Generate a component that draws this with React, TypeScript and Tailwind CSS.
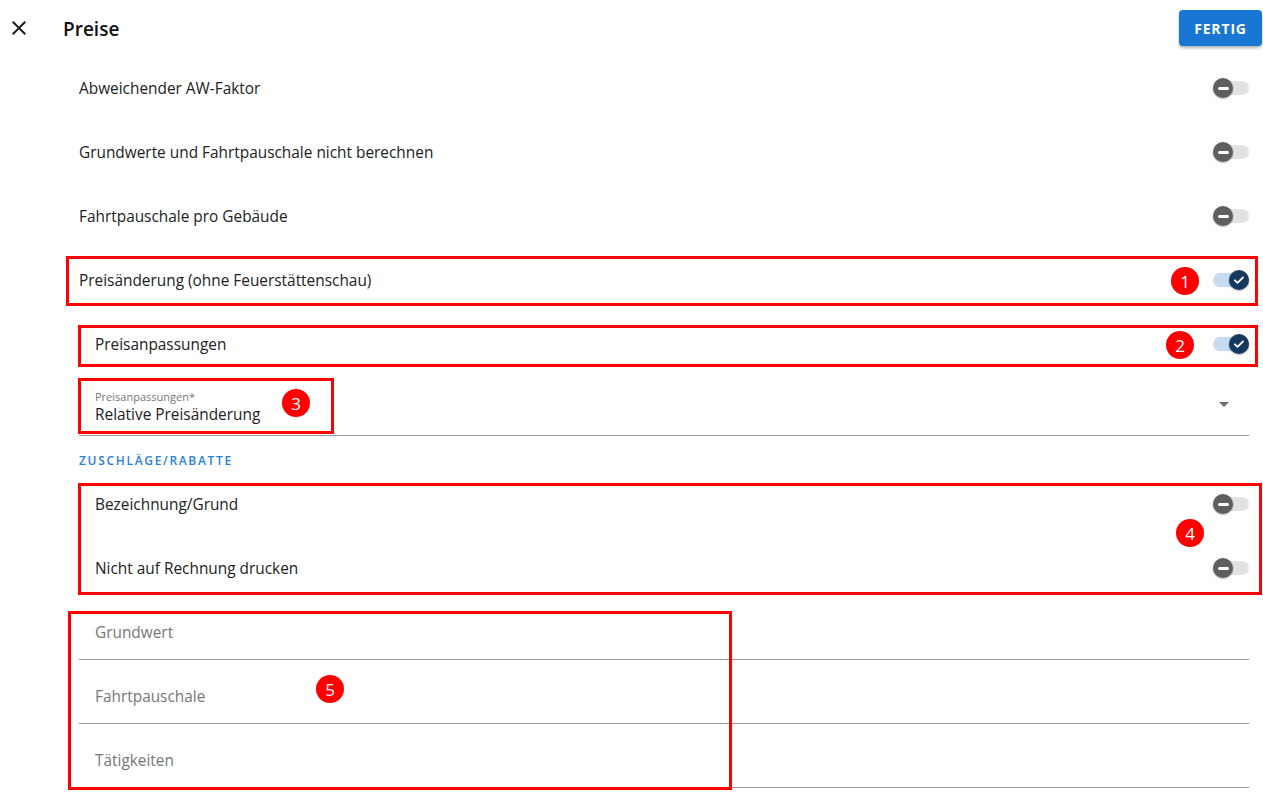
import type { ReactNode } from 'react'

const font = { fontFamily: '"Open Sans", "Noto Sans", sans-serif' }

// Material style switch: grey "minus" thumb when off, navy check thumb when on
const Toggle = ({ on }: { on: boolean }) => (
    <div className="relative w-9 h-5 flex items-center shrink-0">
        <div className={`w-9 h-[14px] rounded-full ${on ? 'bg-[#c6dcf3]' : 'bg-[#e2e2e2]'}`} />
        <div
            className={`absolute top-0 w-5 h-5 rounded-full flex items-center justify-center shadow-[0_1px_2px_rgba(0,0,0,0.3)] ${
                on ? 'left-4 bg-[#163a5e]' : 'left-0 bg-[#5f5f5f]'
            }`}
        >
            {on ? (
                <svg width="14" height="14" viewBox="0 0 24 24">
                    <path d="M5 12.5l4.5 4.5L19 7.5" fill="none" stroke="white" strokeWidth="3" strokeLinecap="round" strokeLinejoin="round" />
                </svg>
            ) : (
                <div className="w-[11px] h-[3px] rounded-sm bg-white" />
            )}
        </div>
    </div>
)

const Badge = ({ n }: { n: number }) => (
    <div className="w-7 h-7 rounded-full bg-[#ff0000] text-white text-[17px] flex items-center justify-center leading-none">
        {n}
    </div>
)

const ToggleRow = ({ label, on = false, indent = false }: { label: string; on?: boolean; indent?: boolean }) => (
    <div className={`h-16 flex items-center justify-between ${indent ? 'pl-4' : ''}`}>
        <span className="text-[15.4px] text-[#222] mt-[2px]">{label}</span>
        <Toggle on={on} />
    </div>
)

const InputField = ({ placeholder, className = '' }: { placeholder: string; className?: string }) => (
    <div className={`flex items-center pl-4 border-b border-[#9a9a9a] ${className}`}>
        <span className="text-[15.4px] text-[#777]">{placeholder}</span>
    </div>
)

// red annotation frame laid over the form
const Frame = ({ className, children }: { className: string; children?: ReactNode }) => (
    <div className={`absolute border-[3px] border-[#ff0000] pointer-events-none ${className}`}>{children}</div>
)

export default function App() {
    return (
        <div className="relative w-[1263px] h-[797px] bg-white overflow-hidden" style={font}>
            {/* Header */}
            <div className="h-14 flex items-center pr-px">
                <div className="w-[63px] flex items-center pl-[7px]">
                    <svg width="24" height="24" viewBox="0 0 24 24" fill="#1f1f1f">
                        <path d="M19 6.41L17.59 5 12 10.59 6.41 5 5 6.41 10.59 12 5 17.59 6.41 19 12 13.41 17.59 19 19 17.59 13.41 12z" />
                    </svg>
                </div>
                <h1 className="flex-1 text-[19px] font-semibold text-[#111] mt-[2px]">Preise</h1>
                <button className="w-[83px] h-9 rounded bg-[#1976d2] text-white text-[14px] font-bold tracking-[0.06em] shadow-[0_2px_3px_rgba(0,0,0,0.3)]">
                    FERTIG
                </button>
            </div>

            {/* Form body */}
            <div className="pl-[79px] pr-[14px]">
                <ToggleRow label="Abweichender AW-Faktor" />
                <ToggleRow label="Grundwerte und Fahrtpauschale nicht berechnen" />
                <ToggleRow label="Fahrtpauschale pro Gebäude" />
                <ToggleRow label="Preisänderung (ohne Feuerstättenschau)" on />
                <ToggleRow label="Preisanpassungen" on indent />

                {/* Select */}
                <div className="h-[60px] flex items-end justify-between border-b border-[#9a9a9a] pl-4 pb-[10px]">
                    <div className="flex flex-col">
                        <span className="text-[11px] leading-[14px] text-[#777]">Preisanpassungen*</span>
                        <span className="text-[15.4px] leading-5 text-[#222] mt-[1px]">Relative Preisänderung</span>
                    </div>
                    <svg width="10" height="5" viewBox="0 0 10 5" className="mb-[18px] mr-[20px]">
                        <path d="M0 0h10L5 5z" fill="#6b6b6b" />
                    </svg>
                </div>

                <div className="h-9 pt-[17px]">
                    <span className="block text-[12px] leading-4 font-semibold tracking-[0.14em] text-[#2a7fd6]">ZUSCHLÄGE/RABATTE</span>
                </div>

                <ToggleRow label="Bezeichnung/Grund" indent />
                <ToggleRow label="Nicht auf Rechnung drucken" indent />

                <InputField placeholder="Grundwert" className="h-[60px] pt-[7px]" />
                <InputField placeholder="Fahrtpauschale" className="h-16 pt-[11px]" />
                <InputField placeholder="Tätigkeiten" className="h-16 pt-[11px]" />
            </div>

            {/* Annotations */}
            <Frame className="left-[66px] top-[256px] w-[1192px] h-[50px]" />
            <div className="absolute left-[1171px] top-[267px]"><Badge n={1} /></div>

            <Frame className="left-[78px] top-[325px] w-[1180px] h-[42px]" />
            <div className="absolute left-[1166px] top-[331px]"><Badge n={2} /></div>

            <Frame className="left-[78px] top-[378px] w-[256px] h-[56px]" />
            <div className="absolute left-[282px] top-[389px]"><Badge n={3} /></div>

            <Frame className="left-[78px] top-[483px] w-[1184px] h-[112px]" />
            <div className="absolute left-[1176px] top-[519px]"><Badge n={4} /></div>

            <Frame className="left-[68px] top-[611px] w-[664px] h-[179px]" />
            <div className="absolute left-[316px] top-[675px]"><Badge n={5} /></div>
        </div>
    )
}
